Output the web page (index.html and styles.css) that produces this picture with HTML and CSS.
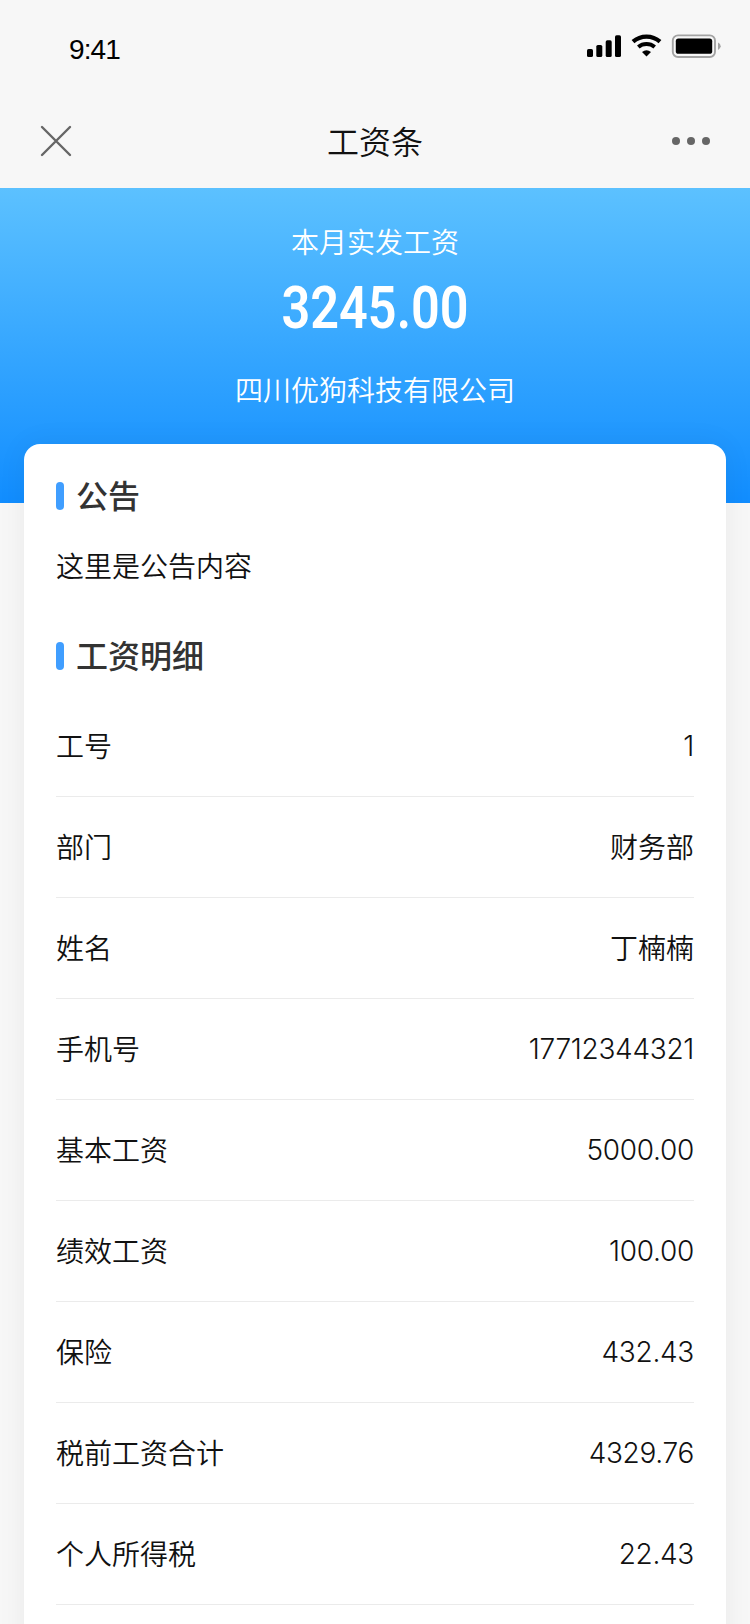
FILE: index.html
```html
<!DOCTYPE html>
<html lang="zh-CN">
<head>
<meta charset="UTF-8">
<meta name="viewport" content="width=device-width, initial-scale=1.0">
<title>工资条</title>
<link rel="stylesheet" href="styles.css">
</head>
<body>
<div class="page">
    <div class="status-bar">
        <span class="time">9:41</span>
        <svg class="status-icons" width="136" height="26" viewBox="0 0 136 26">
            <!-- signal -->
            <rect x="1" y="15" width="6" height="8" rx="1.6"/>
            <rect x="10.3" y="11" width="6" height="12" rx="1.6"/>
            <rect x="19.7" y="6.3" width="6" height="16.7" rx="1.6"/>
            <rect x="29" y="1.3" width="6" height="21.7" rx="1.6"/>
            <!-- wifi -->
            <path d="M47 7.6 A20.5 20.5 0 0 1 74 7.6" fill="none" stroke="#000" stroke-width="4.2"/>
            <path d="M52.3 13 A13 13 0 0 1 68.7 13" fill="none" stroke="#000" stroke-width="4"/>
            <path d="M56 18 Q60.5 14.6 65 18 L60.5 22.5 Z"/>
            <!-- battery -->
            <rect x="86.8" y="1.4" width="42.2" height="21.6" rx="5.2" fill="none" stroke="#a3a3a3" stroke-width="1.9"/>
            <rect x="89.8" y="4.6" width="36.4" height="15.2" rx="2.6"/>
            <path d="M132 8.6 Q134.7 9.8 134.7 12.3 Q134.7 14.8 132 16 Z" fill="#a3a3a3"/>
        </svg>
    </div>
    <div class="nav">
        <svg width="32" height="32" viewBox="0 0 32 32">
            <path d="M2 2 L30 30 M30 2 L2 30" stroke="#666" stroke-width="2.4" stroke-linecap="round"/>
        </svg>
        <h1 class="nav-title">工资条</h1>
        <svg width="40" height="10" viewBox="0 0 40 10" class="more">
            <circle cx="5" cy="5" r="4"/>
            <circle cx="20" cy="5" r="4"/>
            <circle cx="35" cy="5" r="4"/>
        </svg>
    </div>
    <div class="summary">
        <div class="summary-label">本月实发工资</div>
        <div class="summary-amount">3245.00</div>
        <div class="summary-company">四川优狗科技有限公司</div>
    </div>
    <div class="card">
        <h2 class="card-title">公告</h2>
        <p class="notice">这里是公告内容</p>
        <h2 class="card-title">工资明细</h2>
        <ul class="list">
            <li class="row"><span>工号</span><span class="num">1</span></li>
            <li class="row"><span>部门</span><span>财务部</span></li>
            <li class="row"><span>姓名</span><span>丁楠楠</span></li>
            <li class="row"><span>手机号</span><span class="num">17712344321</span></li>
            <li class="row"><span>基本工资</span><span class="num">5000.00</span></li>
            <li class="row"><span>绩效工资</span><span class="num">100.00</span></li>
            <li class="row"><span>保险</span><span class="num">432.43</span></li>
            <li class="row"><span>税前工资合计</span><span class="num">4329.76</span></li>
            <li class="row"><span>个人所得税</span><span class="num">22.43</span></li>
        </ul>
    </div>
</div>
</body>
</html>
```
FILE: styles.css
```css
* {
    box-sizing: border-box;
}
body {
    margin: 0;
    background: #f7f7f7;
    color: #111;
    font-family: Inter, "Noto Sans CJK SC", sans-serif;
    font-size: 28px;
}
h1, h2, p, ul {
    margin: 0;
    padding: 0;
}
.page {
    width: 750px;
    height: 1624px;
    overflow: hidden;
}
.status-bar {
    height: 100px;
    padding: 34px 28px 0 69px;
    display: flex;
    justify-content: space-between;
    align-items: flex-start;
}
.time {
    font-family: "Liberation Sans", Arial, sans-serif;
    font-size: 28px;
    line-height: 32px;
    letter-spacing: -0.9px;
    color: #000;
}
.nav {
    height: 88px;
    padding: 0 39px 6px 40px;
    display: flex;
    justify-content: space-between;
    align-items: center;
}
.nav-title {
    padding: 3px 0 0 7px;
    font-size: 32px;
    font-weight: 350;
    line-height: 48px;
}
.more {
    fill: #666;
}
.summary {
    height: 315px;
    padding-top: 35px;
    background: linear-gradient(to bottom, #5cc1ff 0%, #118dff 100%);
    color: #fff;
    text-align: center;
}
.summary-label,
.summary-company {
    font-weight: 350;
    line-height: 40px;
}
/* narrow figures for the amount */
.summary-amount {
    font-family: Roboto, sans-serif;
    font-size: 60px;
    font-weight: 600;
    line-height: 70px;
    margin: 10px 0 28px;
    transform: scaleX(0.84);
}
.card {
    position: relative;
    width: 702px;
    height: 1300px;
    margin: -59px auto 0;
    padding: 29px 32px 0;
    background: #fff;
    border-radius: 16px;
    box-shadow: 0 0 30px rgba(0, 0, 0, 0.06);
}
.card-title {
    display: flex;
    align-items: center;
    gap: 12px;
    color: #333;
    font-size: 32px;
    font-weight: 500;
    line-height: 48px;
}
.card-title::before {
    content: "";
    width: 8px;
    height: 28px;
    margin-bottom: 2px;
    border-radius: 4px;
    background: #409eff;
}
.notice {
    margin: 26px 0 46px;
    font-weight: 350;
    line-height: 40px;
}
.list {
    margin-top: 15px;
    list-style: none;
}
.row {
    display: flex;
    justify-content: space-between;
    align-items: center;
    height: 101px;
    padding-bottom: 2px;
    border-bottom: 1px solid #ebebeb;
    font-weight: 350;
}
.num {
    padding-top: 2px;
    letter-spacing: -0.3px;
}
```
